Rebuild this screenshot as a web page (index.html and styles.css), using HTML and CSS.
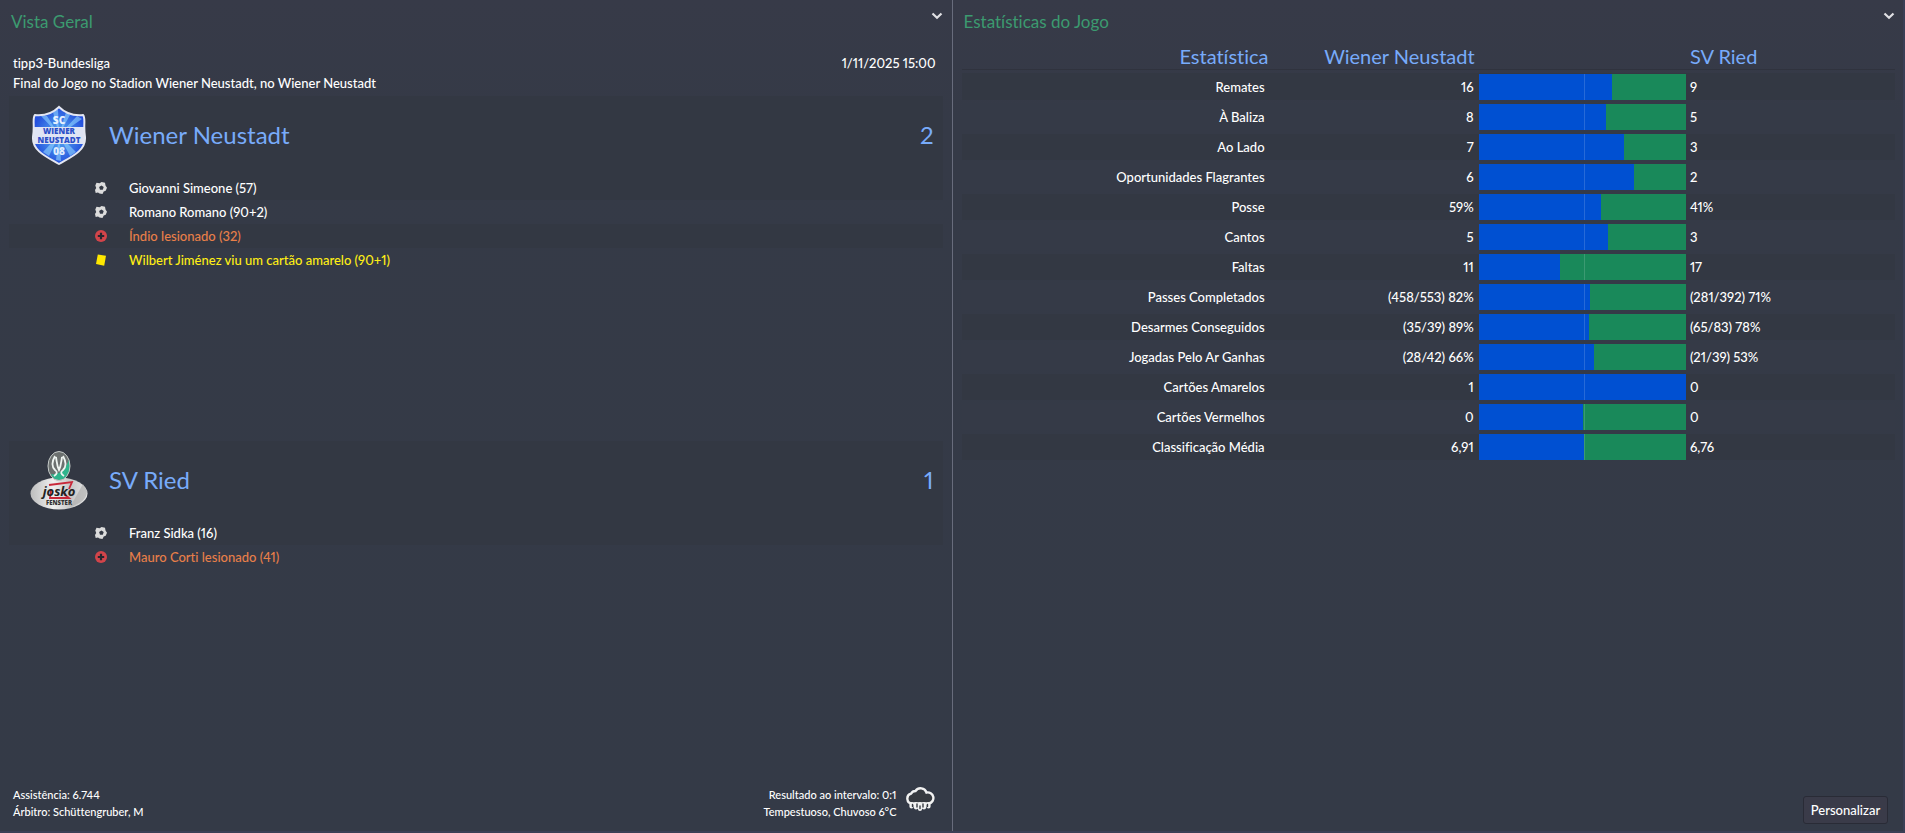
FILE: index.html
```html
<!DOCTYPE html>
<html lang="pt">
<head>
<meta charset="utf-8">
<title>Vista Geral</title>
<link rel="stylesheet" href="styles.css">
</head>
<body>
<svg class="sprite" aria-hidden="true">
  <symbol id="chevron" viewBox="0 0 12 8"><path d="M1.500 1.500 6 5.700l4.500-4.200" fill="none" stroke="currentColor" stroke-width="2.200"/></symbol>
  <symbol id="ball" viewBox="0 0 12 12">
    <path fill="#dcdcdc" fill-rule="evenodd" d="M1.500.8 4.600 1.300 6.600 0 10 .8l.5 2.600L12 5.800 10.700 8.800l-2 .6-1.200 2.600-3-.6-1.500-1-2.300.6L0 8 1.200 6 .3 3.600zM6.400 3.500 4.100 5.100l.9 2.600h2.800l.9-2.600z"/>
  </symbol>
  <symbol id="injury" viewBox="0 0 12 12"><circle cx="6" cy="6" r="6" fill="#d2444a"/><path d="M6 2.800v6.400M2.800 6h6.400" stroke="#25272f" stroke-width="2.200"/></symbol>
  <symbol id="card" viewBox="0 0 12 12"><path d="M2.800.4 11 1.800 9.200 11.800 1 10z" fill="#ffe800"/></symbol>
</svg>
<main class="screen">
  <section class="panel overview">
    <header class="panel-head">
      <h1 class="panel-title">Vista Geral</h1>
      <button class="menu" type="button" aria-label="Opções"><svg class="chevron"><use href="#chevron"/></svg></button>
    </header>
    <div class="match-info">
      <p>tipp3-Bundesliga<br>Final do Jogo no Stadion Wiener Neustadt, no Wiener Neustadt</p>
      <time>1/11/2025 15:00</time>
    </div>
    <div class="teams">
      <article class="team">
        <div class="team-head">
          <svg class="crest" viewBox="0 0 60 60" role="img" aria-label="SC Wiener Neustadt">
            <defs><radialGradient id="sky"><stop offset="0" stop-color="#5cb4f4"/><stop offset="1" stop-color="#2450dc"/></radialGradient></defs>
            <path d="M30 2c6 6 14 9 24 8 3 3 0 10 2 22 1 14-14 20-26 27C18 52 3 46 4 32c2-12-1-19 2-22 10 1 18-2 24-8z" fill="url(#sky)"/>
            <path d="M30 30 12 11h6zM30 30 24 7l5-3zM30 30 37 7l4 3zM30 30 48 11l5 3zM30 30 14 47l6 4zM30 30 27 55l5 1zM30 30 41 51l6-4z" fill="#8fd4ff" opacity=".6"/>
            <path d="M5 22h50v17H5z" fill="#dfe4f4"/>
            <path d="M30 2c6 6 14 9 24 8 3 3 0 10 2 22 1 14-14 20-26 27C18 52 3 46 4 32c2-12-1-19 2-22 10 1 18-2 24-8z" fill="none" stroke="#e4e7f2" stroke-width="2"/>
            <g class="crest-text"><text x="30" y="19" font-size="10" fill="#e8f2ff">SC</text><text x="30" y="29" font-size="8" fill="#2c4fc8">WIENER</text><text x="30" y="38" font-size="8" fill="#2c4fc8">NEUSTADT</text><text x="30" y="50" font-size="10" fill="#dcebff">08</text></g>
          </svg>
          <h2 class="team-name">Wiener Neustadt</h2>
          <span class="score">2</span>
        </div>
        <ul class="events">
          <li><svg><use href="#ball"/></svg>Giovanni Simeone (57)</li>
          <li><svg><use href="#ball"/></svg>Romano Romano (90+2)</li>
          <li class="injured"><svg><use href="#injury"/></svg>Índio lesionado (32)</li>
          <li class="booked"><svg><use href="#card"/></svg>Wilbert Jiménez viu um cartão amarelo (90+1)</li>
        </ul>
      </article>
      <article class="team">
        <div class="team-head">
          <svg class="crest" viewBox="0 0 60 60" role="img" aria-label="SV Ried">
            <defs><linearGradient id="steel" x1="0" x2="1"><stop offset="0" stop-color="#bdbdbd"/><stop offset=".4" stop-color="#efefef"/><stop offset=".7" stop-color="#c6c6c6"/><stop offset="1" stop-color="#e6e6e6"/></linearGradient></defs>
            <ellipse cx="30" cy="43.500" rx="28.500" ry="16" fill="url(#steel)"/>
            <path d="M41 57 54 34l4 7c0 8-7 13-17 16z" fill="#aaa" opacity=".6"/>
            <ellipse cx="30" cy="16" rx="11" ry="14.500" fill="#6b706f"/>
            <path d="M40 9c3 12-2 21-10 21-4 0-7-3-8-6 8 2 16-6 18-15z" fill="#2fb48c"/>
            <ellipse cx="30" cy="16" rx="11" ry="14.500" fill="none" stroke="#c5cac8"/>
            <path d="M26 6c-4 7-3 11 0 14 3 2 2 4-1 6M34 6c4 7 3 11 0 14-3 2-2 4 1 6M27 7c1 6 1 9 3 13 2-4 2-7 3-13" fill="none" stroke="#eef4f1" stroke-width="1.800"/>
            <path d="M20 35l23-3-3 7M22 40l-1 8h19l-5-4" fill="none" stroke="#c8283a" stroke-width="1.800"/>
            <text class="script-text" x="30" y="46" font-size="13" fill="#222">josko</text>
            <text class="crest-text" x="30" y="55" font-size="6" fill="#333">FENSTER</text>
          </svg>
          <h2 class="team-name">SV Ried</h2>
          <span class="score">1</span>
        </div>
        <ul class="events">
          <li><svg><use href="#ball"/></svg>Franz Sidka (16)</li>
          <li class="injured"><svg><use href="#injury"/></svg>Mauro Corti lesionado (41)</li>
        </ul>
      </article>
    </div>
    <footer class="match-foot">
      <p>Assistência: 6.744<br>Árbitro: Schüttengruber, M</p>
      <p class="conditions">Resultado ao intervalo: 0:1<br>Tempestuoso, Chuvoso 6°C</p>
      <svg class="weather" viewBox="0 0 30 26" role="img" aria-label="Chuva">
        <path d="M7 17.500a5 5 0 0 1-1-9.800A5 5 0 0 1 10.500 5a6.200 6.200 0 0 1 11 1.500 5.500 5.500 0 0 1 2.500 11z" fill="#373a40" stroke="#f2f2f2" stroke-width="2.400"/>
        <path d="M6.500 18v2.500M11 18v3.500M15 18v5M19 18v3.500M23.500 18v2.500" stroke="#f2f2f2" stroke-width="4.200" stroke-linecap="round"/>
        <path d="M7.500 18.500v2M12 18v3M18 18v3M22.500 18.500v2M15 20v2.500" stroke="#373a40" stroke-width="1.400" stroke-linecap="round"/>
      </svg>
    </footer>
  </section>
  <section class="panel stats">
    <header class="panel-head">
      <h1 class="panel-title">Estatísticas do Jogo</h1>
      <button class="menu" type="button" aria-label="Opções"><svg class="chevron"><use href="#chevron"/></svg></button>
    </header>
    <table class="stat-table">
      <colgroup><col class="col-label"><col class="col-home"><col class="col-bar"><col class="col-away"></colgroup>
      <thead><tr><th scope="col">Estatística</th><th scope="col">Wiener Neustadt</th><td></td><th scope="col" class="away">SV Ried</th></tr></thead>
      <tbody>
        <tr><th scope="row">Remates</th><td>16</td><td class="cell-bar"><div class="bar"><i style="width:64.3%"></i></div></td><td class="away">9</td></tr>
        <tr><th scope="row">À Baliza</th><td>8</td><td class="cell-bar"><div class="bar"><i style="width:61.4%"></i></div></td><td class="away">5</td></tr>
        <tr><th scope="row">Ao Lado</th><td>7</td><td class="cell-bar"><div class="bar"><i style="width:70%"></i></div></td><td class="away">3</td></tr>
        <tr><th scope="row">Oportunidades Flagrantes</th><td>6</td><td class="cell-bar"><div class="bar"><i style="width:75%"></i></div></td><td class="away">2</td></tr>
        <tr><th scope="row">Posse</th><td>59%</td><td class="cell-bar"><div class="bar"><i style="width:59%"></i></div></td><td class="away">41%</td></tr>
        <tr><th scope="row">Cantos</th><td>5</td><td class="cell-bar"><div class="bar"><i style="width:62.3%"></i></div></td><td class="away">3</td></tr>
        <tr><th scope="row">Faltas</th><td>11</td><td class="cell-bar"><div class="bar"><i style="width:39.2%"></i></div></td><td class="away">17</td></tr>
        <tr><th scope="row">Passes Completados</th><td>(458/553) 82%</td><td class="cell-bar"><div class="bar"><i style="width:53.6%"></i></div></td><td class="away">(281/392) 71%</td></tr>
        <tr><th scope="row">Desarmes Conseguidos</th><td>(35/39) 89%</td><td class="cell-bar"><div class="bar"><i style="width:53.2%"></i></div></td><td class="away">(65/83) 78%</td></tr>
        <tr><th scope="row">Jogadas Pelo Ar Ganhas</th><td>(28/42) 66%</td><td class="cell-bar"><div class="bar"><i style="width:55.5%"></i></div></td><td class="away">(21/39) 53%</td></tr>
        <tr><th scope="row">Cartões Amarelos</th><td>1</td><td class="cell-bar"><div class="bar"><i style="width:100%"></i></div></td><td class="away">0</td></tr>
        <tr><th scope="row">Cartões Vermelhos</th><td>0</td><td class="cell-bar"><div class="bar"><i style="width:50.2%"></i></div></td><td class="away">0</td></tr>
        <tr><th scope="row">Classificação Média</th><td>6,91</td><td class="cell-bar"><div class="bar"><i style="width:50.7%"></i></div></td><td class="away">6,76</td></tr>
      </tbody>
    </table>
    <button class="customise" type="button">Personalizar</button>
  </section>
</main>
</body>
</html>
```
FILE: styles.css
```css
* { box-sizing: border-box; }
body { margin: 0; background: #353a47; color: #fff; font: 500 13px/20px Lato, "Open Sans", sans-serif; font-variant-numeric: proportional-nums; font-variant-ligatures: none; }
h1, h2, p, ul { margin: 0; padding: 0; font-weight: inherit; }
ul { list-style: none; }
.sprite { position: absolute; width: 0; height: 0; }
.screen { display: grid; grid-template-columns: 1fr 1fr; min-height: 100vh; border-bottom: 2px solid #3a3f55; background: linear-gradient(#373a48, #353a47 120px, #343a47); }
.panel { display: flex; flex-direction: column; padding: 0 9px; }
.overview { border-right: 1px solid #686c7c; }
.stats { border-right: 2px solid #3a3f55; padding-right: 8px; }
.panel-head { display: flex; justify-content: space-between; align-items: flex-start; height: 43px; padding: 10px 0 0 2px; }
.panel-title { font-size: 17px; line-height: 24px; color: #3c9a70; font-weight: 400; }
.menu { display: flex; margin: 0; padding: 2px 0; border: 0; background: none; color: #e0e0e4; }
.chevron { width: 12px; height: 8px; }
.match-info { display: flex; justify-content: space-between; padding: 10px 7px 3px 4px; }
.teams { display: grid; grid-auto-rows: 345px; }
.team-head { display: flex; align-items: center; height: 80px; padding: 0 9px 2px 20px; background: #333843; }
.crest { width: 60px; height: 60px; flex: none; margin-right: 20px; }
.crest-text { font-family: "Open Sans", sans-serif; font-weight: 800; text-anchor: middle; }
.script-text { font-family: "Open Sans", sans-serif; font-weight: 700; font-style: italic; text-anchor: middle; }
.team-name, .score { font-size: 24px; line-height: 32px; color: #78abfa; font-weight: 400; }
.score { margin-left: auto; }
.events li { display: flex; align-items: center; gap: 22px; height: 24px; padding-left: 86px; }
.events li:nth-child(odd) { background: #333843; }
.events svg { width: 12px; height: 12px; }
.injured { color: #e87f49; }
.booked { color: #ffee14; }
.match-foot { display: flex; align-items: flex-start; margin-top: auto; padding: 0 8px 11px 4px; font-size: 11px; line-height: 17px; }
.conditions { margin-left: auto; text-align: right; }
.weather { width: 30px; height: 26px; margin-left: 8px; }
.stat-table { width: 100%; table-layout: fixed; border-collapse: collapse; text-align: right; }
.col-label { width: 33%; }
.col-home { width: 22.4%; }
.col-bar { width: 22.2%; }
.stat-table th { font-weight: inherit; }
.stat-table thead tr { border-bottom: 1px solid #30333e; }
.stat-table thead th { height: 26px; padding: 0 4px 0 0; font-size: 20px; line-height: 24px; color: #78abfa; font-weight: 400; }
.stat-table thead th:first-child { padding-right: 1px; }
.stat-table tbody th, .stat-table tbody td { height: 30px; padding: 4px 5px 0; }
.stat-table tbody tr { background: linear-gradient(transparent 4px, #353a47 4px); }
.stat-table tbody tr:nth-child(odd) { background: linear-gradient(transparent 4px, #333843 4px); }
.stat-table .away, .stat-table thead .away { text-align: left; padding-left: 4px; }
.stat-table tbody .cell-bar { padding: 4px 0 0; }
.bar { position: relative; height: 26px; background: #19895a; }
.bar i { display: block; height: 100%; background: #0050d2; }
.bar::after { content: ""; position: absolute; top: 0; bottom: 0; left: 51%; width: 1px; background: rgba(255, 255, 255, .15); }
.customise { align-self: flex-end; margin: auto 7px 7px 0; width: 85px; height: 28px; padding: 0; border: 1px solid #292b36; border-radius: 3px; background: #3a3b49; color: #fff; font: inherit; }
```
